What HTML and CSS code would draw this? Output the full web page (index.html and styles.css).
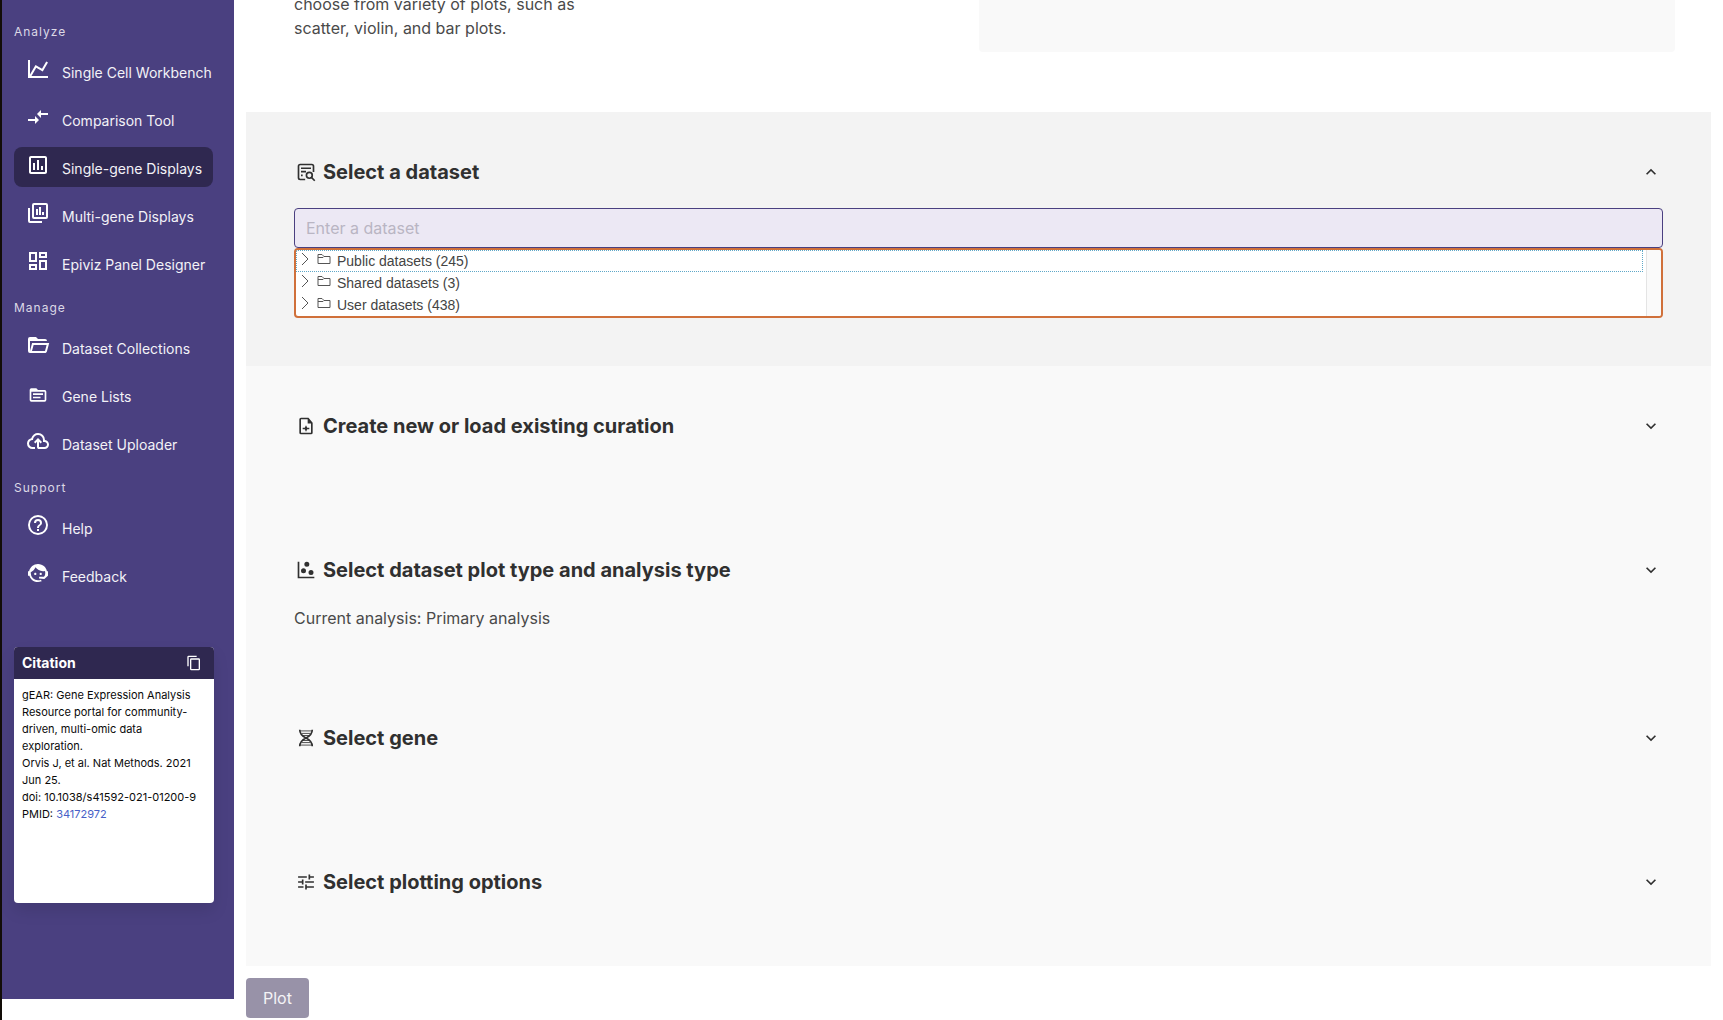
FILE: index.html
```html
<!DOCTYPE html>
<html lang="en">
<head>
<meta charset="utf-8">
<title>gEAR - Single-gene Displays</title>
<meta name="viewport" content="width=device-width, initial-scale=1">
<link rel="stylesheet" href="styles.css">
</head>
<body>
<div class="layout">
  <aside class="sidebar">
    <nav class="menu">
      <p class="menu-label">Analyze</p>
      <ul class="menu-list">
        <li><a href="#workbench"><svg class="icon" viewBox="0 0 24 24"><path d="M16,11.78L20.24,4.45L21.97,5.45L16.74,14.5L10.23,10.75L5.46,19H22V21H2V3H4V17.54L9.5,8L16,11.78Z"/></svg><span>Single Cell Workbench</span></a></li>
        <li><a href="#compare"><svg class="icon" viewBox="0 0 24 24"><path d="M9.01 14H2v2h7.01v3L13 15l-3.99-4v3zm5.98-1v-3H22V8h-7.01V5L11 9l3.99 4z"/></svg><span>Comparison Tool</span></a></li>
        <li><a href="#single-gene" class="is-active" aria-current="page"><svg class="icon" viewBox="0 0 24 24"><path d="M9 17H7V10H9V17M13 17H11V7H13V17M17 17H15V13H17V17M19 19H5V5H19V19M19 3H5C3.9 3 3 3.9 3 5V19C3 20.1 3.9 21 5 21H19C20.1 21 21 20.1 21 19V5C21 3.9 20.1 3 19 3Z"/></svg><span>Single-gene Displays</span></a></li>
        <li><a href="#multi-gene"><svg class="icon" viewBox="0 0 24 24"><path fill-rule="evenodd" d="M20 2H8a2 2 0 0 0-2 2v12a2 2 0 0 0 2 2h12a2 2 0 0 0 2-2V4a2 2 0 0 0-2-2m0 14H8V4h12v12M4 7H2v13a2 2 0 0 0 2 2h12v-2H4V7zM10 8h2v6h-2zM13 6h2v8h-2zM16 11h2v3h-2z"/></svg><span>Multi-gene Displays</span></a></li>
        <li><a href="#epiviz"><svg class="icon" viewBox="0 0 24 24"><path d="M19,5V7H15V5H19M9,5V11H5V5H9M19,13V19H15V13H19M9,17V19H5V17H9M21,3H13V9H21V3M11,3H3V13H11V3M21,11H13V21H21V11M11,15H3V21H11V15Z"/></svg><span>Epiviz Panel Designer</span></a></li>
      </ul>
      <p class="menu-label">Manage</p>
      <ul class="menu-list">
        <li><a href="#collections"><svg class="icon" viewBox="0 0 24 24"><path d="M6.1,10L4,18V8H21A2,2 0 0,0 19,6H12L10,4H4A2,2 0 0,0 2,6V18A2,2 0 0,0 4,20H19C19.9,20 20.7,19.4 20.9,18.5L23.2,10H6.1M19,18H6L7.6,12H20.6L19,18Z"/></svg><span>Dataset Collections</span></a></li>
        <li><a href="#gene-lists"><svg class="icon icon-small" viewBox="0 0 24 24"><path fill-rule="evenodd" d="M20 6H12L10 4H4a2 2 0 0 0-2 2v12a2 2 0 0 0 2 2h16a2 2 0 0 0 2-2V8a2 2 0 0 0-2-2m0 12H4V8h16v10M6 10h12v2H6zM6 14h9v2H6z"/></svg><span>Gene Lists</span></a></li>
        <li><a href="#uploader"><svg class="icon" viewBox="0 0 24 24"><path d="M6.5 20Q4.22 20 2.61 18.43 1 16.85 1 14.58 1 12.63 2.17 11.1 3.35 9.57 5.25 9.15 5.88 6.85 7.75 5.43 9.63 4 12 4 14.93 4 16.96 6.04 19 8.07 19 11 20.73 11.2 21.86 12.5 23 13.78 23 15.5 23 17.38 21.69 18.69 20.38 20 18.5 20H13Q12.18 20 11.59 19.41 11 18.83 11 18V12.85L9.4 14.4 8 13 12 9 16 13 14.6 14.4 13 12.85V18H18.5Q19.55 18 20.27 17.27 21 16.55 21 15.5 21 14.45 20.27 13.73 19.55 13 18.5 13H17V11Q17 8.93 15.54 7.46 14.08 6 12 6 9.93 6 8.46 7.46 7 8.93 7 11H6.5Q5.05 11 4.03 12.03 3 13.05 3 14.5 3 15.95 4.03 17 5.05 18 6.5 18H9V20Z"/></svg><span>Dataset Uploader</span></a></li>
      </ul>
      <p class="menu-label">Support</p>
      <ul class="menu-list">
        <li><a href="#help"><svg class="icon" viewBox="0 0 24 24"><path d="M11,18H13V16H11V18M12,2A10,10 0 0,0 2,12A10,10 0 0,0 12,22A10,10 0 0,0 22,12A10,10 0 0,0 12,2M12,20C7.59,20 4,16.41 4,12C4,7.59 7.59,4 12,4C16.41,4 20,7.59 20,12C20,16.41 16.41,20 12,20M12,6A4,4 0 0,0 8,10H10A2,2 0 0,1 12,8A2,2 0 0,1 14,10C14,12 11,11.75 11,15H13C13,12.75 16,12.5 16,10A4,4 0 0,0 12,6Z"/></svg><span>Help</span></a></li>
        <li><a href="#feedback"><svg class="icon" viewBox="0 0 24 24"><path d="M18.72,14.76C19.07,13.91 19.26,13 19.26,12C19.26,11.28 19.15,10.59 18.96,9.95C18.31,10.1 17.63,10.18 16.92,10.18C13.86,10.18 11.15,8.67 9.5,6.34C8.61,8.5 6.91,10.26 4.77,11.22C4.73,11.47 4.73,11.74 4.73,12A7.27,7.27 0 0,0 12,19.27C13.05,19.27 14.06,19.04 14.97,18.63C15.54,19.72 15.8,20.26 15.78,20.26C14.14,20.81 12.87,21.08 12,21.08C9.58,21.08 7.27,20.13 5.57,18.42C4.53,17.38 3.76,16.11 3.33,14.73H2V10.18H3.09C3.93,6.04 7.6,2.92 12,2.92C14.4,2.92 16.71,3.87 18.42,5.58C19.69,6.84 20.54,8.45 20.89,10.18H22V14.73H21.94L18.38,18L13.08,17.4V15.73H17.91L18.72,14.76M9.27,11.77C9.57,11.77 9.86,11.89 10.07,12.11C10.28,12.32 10.4,12.61 10.4,12.91C10.4,13.21 10.28,13.5 10.07,13.71C9.86,13.92 9.57,14.04 9.27,14.04C8.64,14.04 8.13,13.54 8.13,12.91C8.13,12.28 8.64,11.77 9.27,11.77M14.72,11.77C15.35,11.77 15.85,12.28 15.85,12.91C15.85,13.54 15.35,14.04 14.72,14.04C14.09,14.04 13.58,13.54 13.58,12.91A1.14,1.14 0 0,1 14.72,11.77Z"/></svg><span>Feedback</span></a></li>
      </ul>
    </nav>
    <section class="citation">
      <header class="citation-header">
        <h2>Citation</h2>
        <button type="button" class="copy-button" aria-label="Copy citation"><svg viewBox="0 0 24 24"><path d="M19,21H8V7H19M19,5H8A2,2 0 0,0 6,7V21A2,2 0 0,0 8,23H19A2,2 0 0,0 21,21V7A2,2 0 0,0 19,5M16,1H4A2,2 0 0,0 2,3V17H4V3H16V1Z"/></svg></button>
      </header>
      <div class="citation-body">
        <p>gEAR: Gene Expression Analysis Resource portal for community-driven, multi-omic data exploration.</p>
        <p>Orvis J, et al. Nat Methods. 2021 Jun 25.</p>
        <p>doi: 10.1038/s41592-021-01200-9</p>
        <p>PMID: <a href="#34172972">34172972</a></p>
      </div>
    </section>
  </aside>

  <main class="main">
    <div class="intro">
      <p class="intro-text">choose from variety of plots, such as<br>scatter, violin, and bar plots.</p>
      <div class="intro-panel"></div>
    </div>

    <section class="step is-current">
      <div class="step-header">
        <svg class="step-icon" viewBox="0 0 24 24"><path fill="none" stroke="currentColor" stroke-width="2" d="M11 21H5a2 2 0 0 1-2-2V5a2 2 0 0 1 2-2h14a2 2 0 0 1 2 2v7M6 7.500h12M6 11.500h6M6 16h2M18.500 18.500l4 4"/><circle cx="16" cy="16" r="3.500" fill="none" stroke="currentColor" stroke-width="2"/></svg>
        <h2>Select a dataset</h2>
        <button type="button" class="toggle" aria-label="Collapse" aria-expanded="true"><svg viewBox="0 0 24 24"><path d="M7.410,15.410L12,10.830L16.590,15.410L18,14L12,8L6,14Z"/></svg></button>
      </div>
      <input class="dataset-input" type="text" placeholder="Enter a dataset" aria-label="Enter a dataset">
      <div class="tree">
        <ul class="tree-list">
          <li class="is-focused"><svg class="tree-arrow" viewBox="0 0 16 16"><path d="M5 2l6 6-6 6"/></svg><svg class="tree-folder" viewBox="0 0 14 14"><path d="M1 11.500v-9h4l2 2h6v7zM1 5.500h5l1-1"/></svg><span>Public datasets (245)</span></li>
          <li><svg class="tree-arrow" viewBox="0 0 16 16"><path d="M5 2l6 6-6 6"/></svg><svg class="tree-folder" viewBox="0 0 14 14"><path d="M1 11.500v-9h4l2 2h6v7zM1 5.500h5l1-1"/></svg><span>Shared datasets (3)</span></li>
          <li><svg class="tree-arrow" viewBox="0 0 16 16"><path d="M5 2l6 6-6 6"/></svg><svg class="tree-folder" viewBox="0 0 14 14"><path d="M1 11.500v-9h4l2 2h6v7zM1 5.500h5l1-1"/></svg><span>User datasets (438)</span></li>
        </ul>
        <div class="tree-scrollbar"></div>
      </div>
    </section>

    <section class="step">
      <div class="step-header">
        <svg class="step-icon" viewBox="0 0 24 24"><path fill-rule="evenodd" d="M6 2h9l5 6v12a2 2 0 0 1-2 2H6a2 2 0 0 1-2-2V4a2 2 0 0 1 2-2zM6 4v16h12V9h-4V4zM12 11l1.500 3H16v2h-2.500L12 19l-1.500-3H8v-2h2.500z"/></svg>
        <h2>Create new or load existing curation</h2>
        <button type="button" class="toggle" aria-label="Expand" aria-expanded="false"><svg viewBox="0 0 24 24"><path d="M7.410,8.580L12,13.170L16.590,8.580L18,10L12,16L6,10Z"/></svg></button>
      </div>
    </section>

    <section class="step">
      <div class="step-header">
        <svg class="step-icon" viewBox="0 0 24 24"><path d="M2,2H4V20H22V22H2V2M9,10A3,3 0 0,1 12,13A3,3 0 0,1 9,16A3,3 0 0,1 6,13A3,3 0 0,1 9,10M13,2A3,3 0 0,1 16,5A3,3 0 0,1 13,8A3,3 0 0,1 10,5A3,3 0 0,1 13,2M18,12A3,3 0 0,1 21,15A3,3 0 0,1 18,18A3,3 0 0,1 15,15A3,3 0 0,1 18,12Z"/></svg>
        <h2>Select dataset plot type and analysis type</h2>
        <button type="button" class="toggle" aria-label="Expand" aria-expanded="false"><svg viewBox="0 0 24 24"><path d="M7.410,8.580L12,13.170L16.590,8.580L18,10L12,16L6,10Z"/></svg></button>
      </div>
      <p class="step-text">Current analysis: Primary analysis</p>
    </section>

    <section class="step">
      <div class="step-header">
        <svg class="step-icon" viewBox="0 0 24 24"><path fill="none" stroke="currentColor" stroke-width="2" d="M4.500 2c0 5 2.500 7.500 7.500 10s7.500 5 7.500 10M19.500 2c0 5-2.500 7.500-7.500 10s-7.500 5-7.500 10"/><path fill="none" stroke="currentColor" d="M5 3.500h14M7 6.500h10M8 9h8M8 15h8M7 17.500h10M5 20.500h14"/></svg>
        <h2>Select gene</h2>
        <button type="button" class="toggle" aria-label="Expand" aria-expanded="false"><svg viewBox="0 0 24 24"><path d="M7.410,8.580L12,13.170L16.590,8.580L18,10L12,16L6,10Z"/></svg></button>
      </div>
    </section>

    <section class="step">
      <div class="step-header">
        <svg class="step-icon" viewBox="0 0 24 24"><path d="M2.500 17V19H9V17H2.500M2.500 5V7H13V5H2.500M13 21V19H21.500V17H13V15H11V21H13M7 9V11H2.500V13H7V15H9V9H7M21.500 13V11H11V13H21.500M15 9H17V7H21.500V5H17V3H15V9Z"/></svg>
        <h2>Select plotting options</h2>
        <button type="button" class="toggle" aria-label="Expand" aria-expanded="false"><svg viewBox="0 0 24 24"><path d="M7.410,8.580L12,13.170L16.590,8.580L18,10L12,16L6,10Z"/></svg></button>
      </div>
    </section>

    <button type="button" class="plot-button" disabled>Plot</button>
  </main>
</div>
</body>
</html>
```

FILE: styles.css
```css
* {
  box-sizing: border-box;
}

body,
h2,
p,
ul {
  margin: 0;
  padding: 0;
}

body {
  background: #fff;
  color: #4a4a4a;
  font: 16px/24px Inter, "Liberation Sans", sans-serif;
}

ul {
  list-style: none;
}

svg {
  display: block;
  flex: none;
  fill: currentColor;
}

a {
  text-decoration: none;
}

button {
  border: 0;
  padding: 0;
  background: none;
  color: inherit;
  font: inherit;
}

.layout {
  display: flex;
  align-items: flex-start;
  min-height: 100vh;
  border-left: 2px solid #120d08;
}

/* Sidebar */
.sidebar {
  flex: none;
  width: 232px;
  padding: 24px 20px 96px 12px;
  background: #4a4080;
  color: #fff;
}

.menu-label {
  margin-bottom: 11px;
  color: #dcd9e6;
  font-size: 12px;
  line-height: 16px;
  letter-spacing: 1px;
}

.menu-list {
  display: flex;
  flex-direction: column;
  gap: 8px;
  margin-bottom: 17px;
}

.menu-list a {
  display: flex;
  align-items: center;
  gap: 12px;
  width: 199px;
  height: 40px;
  padding: 4px 0 0 12px;
  border-radius: 8px;
  color: #f3f2f7;
  font-size: 14px;
  line-height: 20px;
  white-space: nowrap;
}

.menu-list a.is-active {
  background: #2f2850;
}

.icon {
  width: 24px;
  height: 24px;
  margin-bottom: 8px;
  color: #fff;
}

.icon-small {
  width: 20px;
  height: 20px;
  margin: 0 2px 4px;
}

.citation {
  min-height: 256px;
  margin-top: 52px;
  overflow: hidden;
  border-radius: 4px;
  background: #fff;
  box-shadow: 0 8px 16px rgba(10, 10, 10, 0.1);
  color: #0a0a0a;
  font-size: 11px;
  line-height: 17px;
}

.citation-header {
  display: flex;
  align-items: center;
  justify-content: space-between;
  height: 32px;
  padding: 0 12px 0 8px;
  background: #2f2850;
  color: #fff;
}

.citation-header h2 {
  font-size: 14px;
  font-weight: 700;
  line-height: 16px;
}

.copy-button svg {
  width: 16px;
  height: 16px;
}

.citation-body {
  padding: 8px;
}

.citation-body a {
  color: #485fc7;
}

/* Main column */
.main {
  flex: 1;
  min-width: 0;
  padding: 0 12px;
}

.intro {
  display: flex;
  align-items: flex-end;
  height: 112px;
  padding: 0 36px 60px 48px;
  overflow: hidden;
}

.intro-text {
  flex: 1;
  padding-bottom: 12px;
}

.intro-panel {
  flex: none;
  width: calc(50% + 6px);
  height: 52px;
  border-radius: 0 0 4px 4px;
  background: #f9f9f9;
}

.step {
  min-height: 144px;
  padding: 48px;
  background: #f9f9f9;
}

.step.is-current {
  background: #f3f3f3;
}

.step-header {
  display: flex;
  align-items: center;
  gap: 7px;
  height: 24px;
  margin-bottom: 24px;
  padding: 0 2px;
  color: #303030;
}

.step-header h2 {
  flex: 1;
  font-size: 20px;
  font-weight: 700;
  line-height: 24px;
}

.step-icon {
  width: 20px;
  height: 20px;
}

.toggle svg {
  width: 20px;
  height: 20px;
}

.dataset-input {
  display: block;
  width: 100%;
  height: 40px;
  padding: 0 11px;
  border: 1px solid #4a4080;
  border-radius: 4px;
  background: #ece8f4;
  color: #363636;
  font: inherit;
}

.dataset-input::placeholder {
  color: #b9b5c3;
  opacity: 1;
}

.tree {
  display: flex;
  gap: 3px;
  height: 70px;
  border: 2px solid #d0703a;
  border-radius: 4px;
  background: #fff;
  overflow: hidden;
}

.tree-list {
  flex: 1;
  color: #444;
  font: 14px/20px "Liberation Sans", Arial, sans-serif;
}

.tree-list li {
  display: flex;
  height: 22px;
  padding: 1px;
}

.tree-list li.is-focused {
  padding: 0;
  border: 1px dotted #5fa8c8;
}

.tree-arrow {
  width: 16px;
  height: 16px;
  margin-right: 4px;
  fill: none;
  stroke: #555;
}

.tree-folder {
  width: 14px;
  height: 14px;
  margin: 1px 6px 0 0;
  fill: none;
  stroke: #555;
}

.tree-scrollbar {
  width: 15px;
  border-left: 1px solid #e4e4e4;
  background: #fafafa;
}

.plot-button {
  display: block;
  height: 40px;
  margin-top: 12px;
  padding: 0 17px;
  border-radius: 4px;
  background: #9892a8;
  color: #f4f3f6;
}
```
